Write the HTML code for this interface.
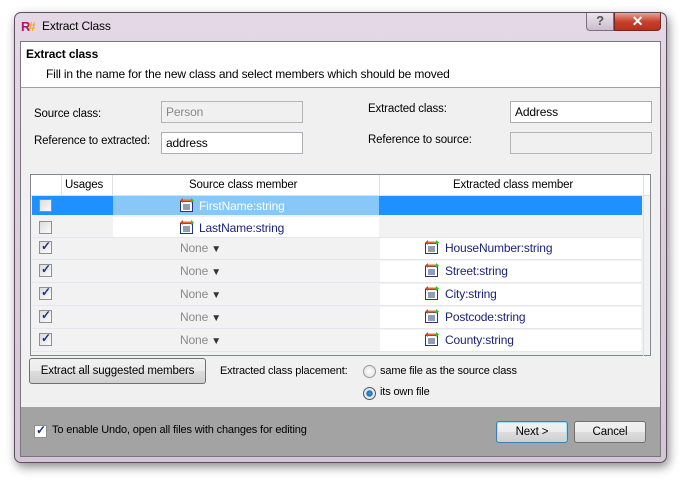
<!DOCTYPE html>
<html><head><meta charset="utf-8"><style>
*{margin:0;padding:0;box-sizing:border-box}
body{width:686px;height:482px;background:#fff;font-family:"Liberation Sans",sans-serif;font-size:11.5px;letter-spacing:-0.15px;color:#000;position:relative;overflow:hidden}
.a{position:absolute;white-space:nowrap}
.frame{left:14px;top:12px;width:653px;height:451px;border:1px solid #5a4f5a;border-radius:7px;background:linear-gradient(#e4d8e6,#d6c4d8);box-shadow:2px 4px 10px rgba(0,0,0,.45)}
.box{background:#fff;border:1px solid #abadb3;height:22px;padding:3px 4px;font-size:12px}
.dis{background:#f0f0f0;border-color:#b5b5b5;color:#888}
.cb{width:13px;height:13px;border:1px solid #8e8f8f;background:linear-gradient(135deg,#dcdcdc,#fbfbfb)}
.ck{position:absolute;left:1px;top:-3px;color:#1b2f8a;font-size:12px;font-weight:bold}
.btn{border:1px solid #707070;border-radius:3px;background:linear-gradient(#f2f2f2 0,#ebebeb 50%,#dddddd 51%,#cfcfcf 100%);text-align:center;font-size:11.5px}
.mem{color:#1a237e;font-size:12px}
.none{color:#8a8a8a;font-size:12px}
</style></head><body>
<div class="a frame"></div>
<div class="a" style="left:21px;top:19px;width:16px;height:14px;font-weight:bold;font-size:13px;color:#b0185f;letter-spacing:-2px">R<span style="color:#f2a81d">#</span></div>
<div class="a" style="left:42px;top:19px;font-size:12px">Extract Class</div>
<div class="a" style="left:586px;top:13px;width:28px;height:18px;border:1px solid #7a6f7a;border-top:0;border-radius:0 0 0 4px;background:linear-gradient(#ece4ee,#cbbccd);text-align:center;font-weight:bold;color:#555;font-size:13px">?</div>
<div class="a" style="left:614px;top:13px;width:47px;height:18px;border:1px solid #6e2a22;border-top:0;border-radius:0 0 4px 0;background:linear-gradient(#e8a394,#c8412e 50%,#b8301c);text-align:center;color:#fff;font-weight:bold;font-size:14px;line-height:16px">✕</div>
<div class="a" style="left:20px;top:41px;width:641px;height:416px;background:#f0f0f0;border:1px solid #777"></div>
<div class="a" style="left:21px;top:42px;width:639px;height:46px;background:#fff;border-bottom:1px solid #a0a0a0"></div>
<div class="a" style="left:26px;top:47px;font-weight:bold;font-size:12px">Extract class</div>
<div class="a" style="left:46px;top:67px;font-size:12px">Fill in the name for the new class and select members which should be moved</div>
<div class="a" style="left:34px;top:108px">Source class:</div>
<div class="a box dis" style="left:161px;top:101px;width:142px">Person</div>
<div class="a" style="left:34px;top:135px">Reference to extracted:</div>
<div class="a box" style="left:161px;top:132px;width:142px">address</div>
<div class="a" style="left:368px;top:103px">Extracted class:</div>
<div class="a box" style="left:510px;top:101px;width:142px">Address</div>
<div class="a" style="left:368px;top:134px">Reference to source:</div>
<div class="a box dis" style="left:510px;top:132px;width:142px"></div>
<div class="a" style="left:30px;top:174px;width:621px;height:182px;border:1px solid #828790;background:#f2f2f2"></div>
<div class="a" style="left:31px;top:175px;width:619px;height:21px;background:#fff;border-bottom:1px solid #e0e0e0"></div>
<div class="a" style="left:61px;top:175px;width:1px;height:21px;background:#e0e0e0"></div>
<div class="a" style="left:112px;top:175px;width:1px;height:21px;background:#e0e0e0"></div>
<div class="a" style="left:379px;top:175px;width:1px;height:21px;background:#e0e0e0"></div>
<div class="a" style="left:643px;top:175px;width:1px;height:181px;background:#e0e0e0"></div>
<div class="a" style="left:65px;top:179px">Usages</div>
<div class="a" style="left:189px;top:179px">Source class member</div>
<div class="a" style="left:453px;top:179px">Extracted class member</div>
<div class="a" style="left:32px;top:196px;width:81px;height:19px;background:#1e90ff"></div>
<div class="a" style="left:113px;top:196px;width:266px;height:19px;background:#88c8f8"></div>
<div class="a" style="left:379px;top:196px;width:263px;height:19px;background:#1e90ff"></div>
<div class="a cb" style="left:39px;top:199px"></div>
<svg class="a" style="left:179px;top:197px" width="16" height="16" viewBox="0 0 16 16"><rect x="1.5" y="4.5" width="12" height="10" fill="#fff" stroke="#203a70"/><path d="M4 8h7M4 10h7M4 12h7" stroke="#203a70"/><path d="M1 3.5l3-2.5v5z" fill="#e2441c"/><path d="M15 3.5l-3-2.5v5z" fill="#30c030"/><rect x="4" y="2.5" width="8" height="2" fill="#e07030"/></svg>
<div class="a mem" style="left:199px;top:199px;color:#fff">FirstName:string</div>
<div class="a" style="left:113px;top:217px;width:266px;height:20px;background:#fff"></div>
<div class="a cb" style="left:39px;top:221px"></div>
<svg class="a" style="left:179px;top:219px" width="16" height="16" viewBox="0 0 16 16"><rect x="1.5" y="4.5" width="12" height="10" fill="#fff" stroke="#203a70"/><path d="M4 8h7M4 10h7M4 12h7" stroke="#203a70"/><path d="M1 3.5l3-2.5v5z" fill="#e2441c"/><path d="M15 3.5l-3-2.5v5z" fill="#30c030"/><rect x="4" y="2.5" width="8" height="2" fill="#e07030"/></svg>
<div class="a mem" style="left:199px;top:221px">LastName:string</div>
<div class="a" style="left:32px;top:237px;width:610px;height:1px;background:#e6e6f0"></div>
<div class="a" style="left:380px;top:238px;width:261px;height:21px;background:#fff"></div>
<div class="a" style="left:380px;top:261px;width:261px;height:21px;background:#fff"></div>
<div class="a" style="left:380px;top:284px;width:261px;height:21px;background:#fff"></div>
<div class="a" style="left:380px;top:307px;width:261px;height:21px;background:#fff"></div>
<div class="a" style="left:380px;top:330px;width:261px;height:21px;background:#fff"></div>
<div class="a" style="left:32px;top:259px;width:610px;height:1px;background:#e6e6f0"></div>
<div class="a" style="left:32px;top:282px;width:610px;height:1px;background:#e6e6f0"></div>
<div class="a" style="left:32px;top:305px;width:610px;height:1px;background:#e6e6f0"></div>
<div class="a" style="left:32px;top:328px;width:610px;height:1px;background:#e6e6f0"></div>
<div class="a" style="left:32px;top:351px;width:610px;height:1px;background:#e6e6f0"></div>
<div class="a cb" style="left:39px;top:241px"><span class="ck">✓</span></div>
<div class="a cb" style="left:39px;top:264px"><span class="ck">✓</span></div>
<div class="a cb" style="left:39px;top:287px"><span class="ck">✓</span></div>
<div class="a cb" style="left:39px;top:310px"><span class="ck">✓</span></div>
<div class="a cb" style="left:39px;top:333px"><span class="ck">✓</span></div>
<div class="a none" style="left:180px;top:241px">None <span style="color:#333;font-size:10px">▼</span></div>
<div class="a none" style="left:180px;top:264px">None <span style="color:#333;font-size:10px">▼</span></div>
<div class="a none" style="left:180px;top:287px">None <span style="color:#333;font-size:10px">▼</span></div>
<div class="a none" style="left:180px;top:310px">None <span style="color:#333;font-size:10px">▼</span></div>
<div class="a none" style="left:180px;top:333px">None <span style="color:#333;font-size:10px">▼</span></div>
<svg class="a" style="left:424px;top:239px" width="16" height="16" viewBox="0 0 16 16"><rect x="1.5" y="4.5" width="12" height="10" fill="#fff" stroke="#203a70"/><path d="M4 8h7M4 10h7M4 12h7" stroke="#203a70"/><path d="M1 3.5l3-2.5v5z" fill="#e2441c"/><path d="M15 3.5l-3-2.5v5z" fill="#30c030"/><rect x="4" y="2.5" width="8" height="2" fill="#e07030"/></svg>
<svg class="a" style="left:424px;top:262px" width="16" height="16" viewBox="0 0 16 16"><rect x="1.5" y="4.5" width="12" height="10" fill="#fff" stroke="#203a70"/><path d="M4 8h7M4 10h7M4 12h7" stroke="#203a70"/><path d="M1 3.5l3-2.5v5z" fill="#e2441c"/><path d="M15 3.5l-3-2.5v5z" fill="#30c030"/><rect x="4" y="2.5" width="8" height="2" fill="#e07030"/></svg>
<svg class="a" style="left:424px;top:285px" width="16" height="16" viewBox="0 0 16 16"><rect x="1.5" y="4.5" width="12" height="10" fill="#fff" stroke="#203a70"/><path d="M4 8h7M4 10h7M4 12h7" stroke="#203a70"/><path d="M1 3.5l3-2.5v5z" fill="#e2441c"/><path d="M15 3.5l-3-2.5v5z" fill="#30c030"/><rect x="4" y="2.5" width="8" height="2" fill="#e07030"/></svg>
<svg class="a" style="left:424px;top:308px" width="16" height="16" viewBox="0 0 16 16"><rect x="1.5" y="4.5" width="12" height="10" fill="#fff" stroke="#203a70"/><path d="M4 8h7M4 10h7M4 12h7" stroke="#203a70"/><path d="M1 3.5l3-2.5v5z" fill="#e2441c"/><path d="M15 3.5l-3-2.5v5z" fill="#30c030"/><rect x="4" y="2.5" width="8" height="2" fill="#e07030"/></svg>
<svg class="a" style="left:424px;top:331px" width="16" height="16" viewBox="0 0 16 16"><rect x="1.5" y="4.5" width="12" height="10" fill="#fff" stroke="#203a70"/><path d="M4 8h7M4 10h7M4 12h7" stroke="#203a70"/><path d="M1 3.5l3-2.5v5z" fill="#e2441c"/><path d="M15 3.5l-3-2.5v5z" fill="#30c030"/><rect x="4" y="2.5" width="8" height="2" fill="#e07030"/></svg>
<div class="a mem" style="left:445px;top:241px">HouseNumber:string</div>
<div class="a mem" style="left:445px;top:264px">Street:string</div>
<div class="a mem" style="left:445px;top:287px">City:string</div>
<div class="a mem" style="left:445px;top:310px">Postcode:string</div>
<div class="a mem" style="left:445px;top:333px">County:string</div>
<div class="a btn" style="left:29px;top:358px;width:177px;height:26px;line-height:24px">Extract all suggested members</div>
<div class="a" style="left:220px;top:365px;font-size:11px">Extracted class placement:</div>
<div class="a" style="left:363px;top:365px;width:13px;height:13px;border-radius:50%;border:1px solid #999;background:radial-gradient(#fff,#ddd)"></div>
<div class="a" style="left:380px;top:365px;font-size:11px">same file as the source class</div>
<div class="a" style="left:363px;top:387px;width:13px;height:13px;border-radius:50%;border:1px solid #555;background:radial-gradient(#2fa2e0 0,#1a6bb0 35%,#d8e8f4 45%,#eee 100%)"></div>
<div class="a" style="left:380px;top:386px;font-size:11px">its own file</div>
<div class="a" style="left:21px;top:407px;width:639px;height:49px;background:#a3a3a3"></div>
<div class="a cb" style="left:34px;top:425px;background:#fff"><span class="ck">✓</span></div>
<div class="a" style="left:52px;top:424px;font-size:11px">To enable Undo, open all files with changes for editing</div>
<div class="a btn" style="left:496px;top:421px;width:72px;height:22px;line-height:20px;border-color:#3c7fb1;box-shadow:inset 0 0 0 1px #9fe0ff">Next &gt;</div>
<div class="a btn" style="left:574px;top:421px;width:72px;height:22px;line-height:20px">Cancel</div>
</body></html>
